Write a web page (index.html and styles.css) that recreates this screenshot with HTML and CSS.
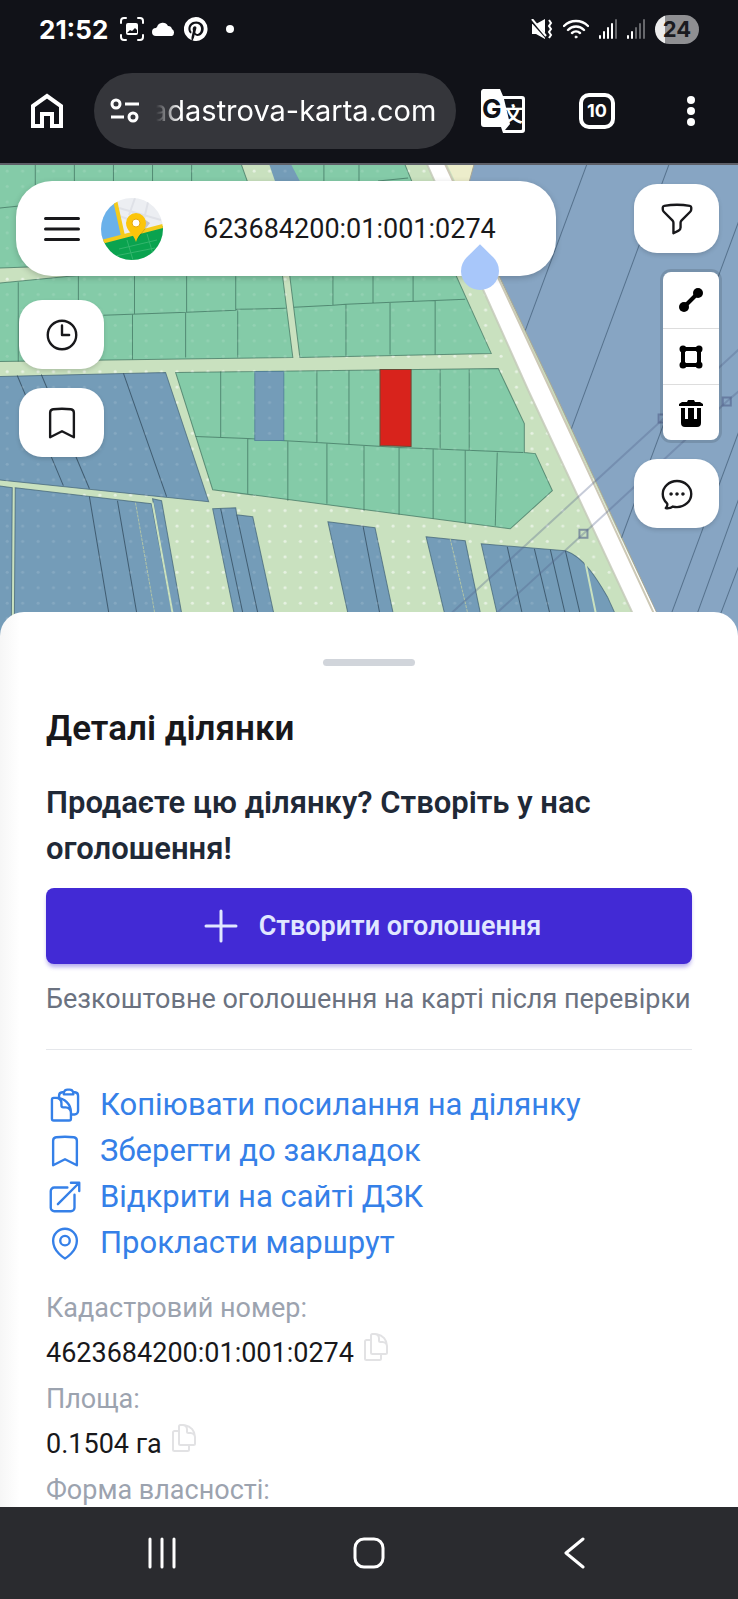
FILE: index.html
```html
<!DOCTYPE html>
<html lang="uk">
<head>
    <meta charset="UTF-8">
    <meta name="viewport" content="width=device-width, initial-scale=1.0">
    <title>Кадастрова карта</title>
    <link rel="stylesheet" href="styles.css">
</head>
<body>
    <header class="phone-top">
        <div class="status">
            <span class="time">21:52</span>
            <svg width="24" height="24" viewBox="0 0 24 24" fill="none" stroke="#fff" stroke-width="2" stroke-linecap="round">
                <path d="M1 6V4a3 3 0 0 1 3-3h2M18 1h2a3 3 0 0 1 3 3v2M23 18v2a3 3 0 0 1-3 3h-2M6 23H4a3 3 0 0 1-3-3v-2"/>
                <rect x="6" y="6" width="12" height="12" rx="2" fill="#fff" stroke="none"/>
                <path d="M7 16l3-3 2 1 3-3 2 2v3z" fill="#111218" stroke="none"/>
            </svg>
            <svg width="24" height="14" viewBox="0 0 24 14" fill="#fff">
                <path d="M4 14a4 4 0 0 1 0-8 2 2 0 0 1 1-1 6 6 0 0 1 11-1 4 4 0 0 1 4 3 4 4 0 0 1 0 7z"/>
            </svg>
            <svg width="24" height="24" viewBox="0 0 24 24" fill="#fff">
                <path d="M12 0a12 12 0 0 0-4.4 23.2c-.1-1-.2-2.400 0-3.400l1.400-6s-.3-.7-.3-1.700c0-1.700 1-2.900 2.200-2.900 1 0 1.500.8 1.500 1.700 0 1-.7 2.600-1 4-.3 1.200.6 2.200 1.800 2.200 2.100 0 3.800-2.300 3.800-5.500 0-2.900-2.100-4.900-5-4.900-3.400 0-5.500 2.600-5.500 5.200 0 1 .4 2.100.9 2.700.1.100.1.200.1.300l-.3 1.400c-.1.200-.2.300-.4.200-1.500-.7-2.400-2.900-2.400-4.600 0-3.800 2.800-7.300 7.900-7.300 4.200 0 7.400 3 7.400 6.900 0 4.100-2.600 7.500-6.200 7.500-1.200 0-2.400-.6-2.800-1.400l-.7 2.900c-.3 1-1 2.300-1.500 3.100A12 12 0 1 0 12 0z"/>
            </svg>
            <span class="dot"></span>
            <div class="status-right">
                <svg width="22" height="20" viewBox="0 0 22 20" fill="#fff">
                    <path d="M1 5h4l9-5v20l-9-5H1z"/>
                    <path d="M0 1l17 19" stroke="#111218" stroke-width="3"/>
                    <path d="M1 0l14 17" stroke="#fff" stroke-width="2"/>
                    <path d="M18 1l2 3-2 3 2 3-2 3 2 3-2 3" fill="none" stroke="#fff" stroke-width="2"/>
                </svg>
                <svg width="26" height="20" viewBox="0 0 26 20" fill="none" stroke="#fff" stroke-width="2.400" stroke-linecap="round">
                    <path d="M1 7a17 17 0 0 1 24 0M5 11a11 11 0 0 1 16 0M9 14a6 6 0 0 1 8 0"/>
                    <circle cx="13" cy="18" r="1" fill="#fff" stroke-width="1"/>
                </svg>
                <svg width="18" height="20" viewBox="0 0 18 20" stroke="#fff" stroke-width="2" stroke-linecap="round">
                    <path d="M1 17v2M5 13v6M9 9v10M13 5v14"/>
                    <path d="M17 1v18" stroke="#66676b"/>
                </svg>
                <svg width="18" height="20" viewBox="0 0 18 20" stroke="#fff" stroke-width="2" stroke-linecap="round">
                    <path d="M1 17v2M5 13v6"/>
                    <path d="M9 9v10M13 5v14M17 1v18" stroke="#66676b"/>
                </svg>
                <span class="battery">24</span>
            </div>
        </div>
        <div class="toolbar">
            <button class="tool" aria-label="Home">
                <svg width="32" height="36" viewBox="0 0 32 36" fill="none" stroke="#fff" stroke-width="4">
                    <path d="M2 13L16 3l14 10v20h-9V21H11v12H2z"/>
                </svg>
            </button>
            <div class="address">
                <svg width="30" height="26" viewBox="0 0 30 26" fill="none" stroke="#fff" stroke-width="3">
                    <circle cx="6" cy="6" r="4"/>
                    <path d="M15 6h14M1 19h13"/>
                    <circle cx="23" cy="19" r="4"/>
                </svg>
                <input type="text" value="adastrova-karta.com" aria-label="Address">
            </div>
            <button class="tool" aria-label="Translate">
                <svg width="44" height="44" viewBox="0 0 44 44">
                    <path d="M2 0h17l3 7h19a3 3 0 0 1 3 3v31a3 3 0 0 1-3 3H22l-2-6H3a3 3 0 0 1-3-3V3a3 3 0 0 1 2-3z" fill="#fff"/>
                    <path d="M23 10h17a1 1 0 0 1 1 1v29a1 1 0 0 1-1 1H24l5-6z" fill="#111218"/>
                    <text class="g-letter" x="1" y="29">G</text>
                    <text class="han-letter" x="22" y="33">文</text>
                </svg>
            </button>
            <button class="tool" aria-label="Tabs"><span class="tabs">10</span></button>
            <button class="tool" aria-label="Menu">
                <svg width="10" height="32" viewBox="0 0 10 32" fill="#fff">
                    <circle cx="5" cy="5" r="4"/><circle cx="5" cy="16" r="4"/><circle cx="5" cy="27" r="4"/>
                </svg>
            </button>
        </div>
    </header>

    <main class="page">
        <section class="map">
            <svg class="map-canvas" viewBox="0 165 738 470" preserveAspectRatio="xMidYMin slice">
                <defs>
                    <pattern id="dots" x="2" y="11" width="15.400" height="15.400" patternUnits="userSpaceOnUse">
                        <circle cx="6" cy="6" r="1.500" fill="#fff" fill-opacity=".5"/>
                    </pattern>
                    <pattern id="dots-soft" x="2" y="11" width="15.400" height="15.400" patternUnits="userSpaceOnUse">
                        <circle cx="6" cy="6" r="1.500" fill="#fff" fill-opacity=".12"/>
                    </pattern>
                </defs>
                <rect y="165" width="738" height="470" fill="#c9e1bf"/>
                <rect y="165" width="738" height="470" fill="url(#dots)"/>

                <!-- green plots -->
                <g fill="#84cba8" stroke="#3d6f5d" stroke-opacity=".7">
                    <path d="M-2 160H240L275 258L-2 268z"/>
                    <path d="M288 160H403L440 250H320z"/>
                    <path d="M-2 283L70 276L281 262L293 357L-2 361z"/>
                    <path d="M288 260H449L491 353L300 357z"/>
                    <path d="M176 372L498 368L524 423V452L535 453L552 490L510 528L213 489z"/>
                    <path fill="none" d="M36 165v20M75 165v20M114 165v20M153 165v20M192 165v20M324 165v20M359 165v20M0 208l20-2M378 181l30-3
                        M19 282v79M79 276v40M135 276v38M187 276v36M236 276v34M104 315l83-3 49-2 1-1 49-1M133 314v45M186 312v45M238 310v47
                        M294 307l39-2 13-1 46-2 73-3M333 276v29M373 276v27M413 276v25M346 304v52M390 302v52M435 300v54
                        M196 436l52 2 69 4 82 5 124 5
                        M221 371v66M317 370v72M349 370v74M440 369v79M469 369v81
                        M248 438v55M288 440v60M327 443v60M364 445v65M399 447v67M433 448v70M465 450v73M497 452l-2 73"/>
                </g>
                <path d="M268 160h21l26 50h-30z" fill="#749cb8"/>
                <path d="M255 371h29v69h-29z" fill="#749cb8" stroke="#4a7896" stroke-opacity=".7"/>

                <!-- blue plots -->
                <g fill="#749cb8" stroke="#3f5f73" stroke-opacity=".7">
                    <path d="M-2 376L166 372L209 501L-2 479z"/>
                    <path d="M-2 485L13 487L12 640H-2zM16 487L152 503L178 640H15z"/>
                    <path d="M153 498l9 2 25 140h-9z"/>
                    <path d="M213 508l23-1 1 7 16 2 27 124h-40z"/>
                    <path d="M328 521l47 6 24 113h-45z"/>
                    <path d="M426 536l39 4 21 100h-35z"/>
                    <path d="M481 543l84 7c18 6 31 27 42 46l20 44H503z"/>
                    <path fill="none" stroke="#2b4252" d="M18 375l46 110M42 374l48 114M124 373l43 123M90 496l24 144M118 500l24 140
                        M221 508l28 132M237 514l27 126M363 525l22 115M507 546l21 94M534 548l22 92M550 549l21 91M565 550l21 90"/>
                    <path fill="none" stroke="#c9d4a0" stroke-dasharray="3 1" d="M136 502l24 138M450 538l24 102"/>
                    <path fill="none" stroke="#c9e1bf" stroke-opacity="1" stroke-width="2" d="M153 502l25 138M585 562l16 78"/>
                </g>
                <rect y="165" width="560" height="470" fill="url(#dots-soft)"/>

                <!-- selected plot -->
                <path d="M380 369h31v77l-31-1z" fill="#d8231c" stroke="#6b4a35"/>

                <!-- field on the far side of the road -->
                <path d="M445 160h30l-6 22 30 94z" fill="#ecedcb"/>
                <path d="M475 160l-6 22 30 94 52 109 118 255h80V160z" fill="#87a5c3" stroke="#a9a697"/>
                <path fill="none" stroke="#4a6580" stroke-opacity=".8" d="M588 160l-63 170M670 160l-99 268M738 221L621 537M738 431l-77 208M738 498l-51 141M738 565l-28 74"/>
                <path d="M425 160l59 132 44 98 117 250h24L548 385 443 160z" fill="#fff"/>
                <path d="M425 160l59 132 44 98 117 250" fill="none" stroke="#c3c8b8" stroke-width="2" stroke-opacity=".8"/>
                <path d="M443 160l105 225 118 255" fill="none" stroke="#cdc9b6" stroke-width="2"/>

                <!-- power lines -->
                <g fill="none" stroke="#52608a" stroke-opacity=".32" stroke-width="2">
                    <path d="M422 639L662 419l76-70M467 639l116-106 143-132 14-12"/>
                    <path stroke-opacity=".6" d="M579 529h8v8h-8zM722 397h8v8h-8zM658 414h8v8h-8z"/>
                </g>
            </svg>

            <div class="map-col left">
                <div class="search">
                    <button class="burger" aria-label="Меню">
                        <svg class="ico ico-lg" viewBox="0 0 24 24"><path d="M3.750 6.750h16.500M3.750 12h16.500m-16.500 5.250h16.500"/></svg>
                    </button>
                    <a href="#" class="logo" aria-label="Кадастрова карта">
                        <svg width="62" height="62" viewBox="0 0 62 62">
                            <clipPath id="logo-clip"><circle cx="31" cy="31" r="31"/></clipPath>
                            <g clip-path="url(#logo-clip)">
                                <rect width="62" height="62" fill="#eceef2"/>
                                <path d="M18 10l42 12M34 0l-6 17M48 0l-8 34M18 18l24 8" stroke="#dfe1e7" stroke-width="2"/>
                                <path d="M0 0h13l9 38L0 44z" fill="#6ab1ea"/>
                                <path d="M0 44l62-16v34H0z" fill="#0aa34f"/>
                                <path d="M18 51l38-9M26 42l6 20M46 36l6 20M14 58l40-8" stroke="#34b56d" fill="none"/>
                                <path d="M0 44l62-16M14 2l8 36" stroke="#f5cb1b" stroke-width="4" fill="none"/>
                                <path d="M35 43l14-18-6-4z" fill="#000" fill-opacity=".18"/>
                                <path d="M35 44c-2-8-10-11-10-19a10 10 0 0 1 20 0c0 8-8 11-10 19z" fill="#fcc50a"/>
                                <circle cx="35" cy="25" r="4" fill="#fff" stroke="#e8a90c" stroke-width="1"/>
                            </g>
                        </svg>
                    </a>
                    <input type="text" value="623684200:01:001:0274" aria-label="Пошук ділянки">
                    <span class="caret"></span>
                </div>
                <button class="map-btn" aria-label="Історія">
                    <svg class="ico" viewBox="0 0 24 24"><path d="M12 6v6h4.500m4.500 0a9 9 0 1 1-18 0 9 9 0 0 1 18 0Z"/></svg>
                </button>
                <button class="map-btn" aria-label="Закладки">
                    <svg class="ico" viewBox="0 0 24 24"><path d="M17.593 3.322c1.100.128 1.907 1.077 1.907 2.185V21L12 17.250 4.500 21V5.507c0-1.108.806-2.057 1.907-2.185a48.507 48.507 0 0 1 11.186 0Z"/></svg>
                </button>
            </div>

            <div class="map-col right">
                <button class="map-btn" aria-label="Фільтр">
                    <svg class="ico" viewBox="0 0 24 24"><path d="M12 3c2.755 0 5.455.232 8.083.678.533.09.917.556.917 1.096v1.044a2.250 2.250 0 0 1-.659 1.591l-5.432 5.432a2.250 2.250 0 0 0-.659 1.591v2.927a2.250 2.250 0 0 1-1.244 2.013L9.750 21v-6.568a2.250 2.250 0 0 0-.659-1.591L3.659 7.409A2.250 2.250 0 0 1 3 5.818V4.774c0-.54.384-1.006.917-1.096A48.320 48.320 0 0 1 12 3Z"/></svg>
                </button>
                <div class="draw">
                    <button aria-label="Лінія">
                        <svg width="24" height="24" viewBox="0 0 24 24">
                            <path d="M5 19L19 5" stroke="#000" stroke-width="4"/>
                            <circle cx="5" cy="19" r="5"/><circle cx="19" cy="5" r="5"/>
                        </svg>
                    </button>
                    <button aria-label="Полігон">
                        <svg width="24" height="24" viewBox="0 0 24 24">
                            <path d="M4 4h16v16H4z" fill="none" stroke="#000" stroke-width="4"/>
                            <circle cx="4" cy="4" r="3.500"/><circle cx="20" cy="4" r="3.500"/><circle cx="4" cy="20" r="3.500"/><circle cx="20" cy="20" r="3.500"/>
                        </svg>
                    </button>
                    <button aria-label="Видалити">
                        <svg width="24" height="28" viewBox="0 0 24 28">
                            <path d="M0 7V5l3-2h5l1-2h6l1 2h5l3 2v2zM2 9h20v15a4 4 0 0 1-4 4H6a4 4 0 0 1-4-4z"/>
                            <path d="M6 9h3v11H6zM15 9h3v11h-3z" fill="#fff"/>
                        </svg>
                    </button>
                </div>
                <button class="map-btn" aria-label="Чат">
                    <svg class="ico" viewBox="0 0 24 24"><path d="M8.625 12a.375.375 0 1 1-.75 0 .375.375 0 0 1 .75 0Zm0 0H8.250m4.125 0a.375.375 0 1 1-.75 0 .375.375 0 0 1 .75 0Zm0 0H12m4.125 0a.375.375 0 1 1-.75 0 .375.375 0 0 1 .75 0Zm0 0h-.375M21 12c0 4.556-4.030 8.250-9 8.250a9.764 9.764 0 0 1-2.555-.337A5.972 5.972 0 0 1 5.410 20.970a5.969 5.969 0 0 1-.474-.065 4.480 4.480 0 0 0 .978-2.025c.09-.457-.133-.901-.467-1.226C3.930 16.178 3 14.189 3 12c0-4.556 4.030-8.250 9-8.250s9 3.694 9 8.250Z"/></svg>
                </button>
            </div>
        </section>

        <section class="sheet">
            <div class="handle"></div>
            <h1>Деталі ділянки</h1>
            <h2>Продаєте цю ділянку? Створіть у нас оголошення!</h2>
            <button class="create">
                <svg class="ico ico-lg" viewBox="0 0 24 24"><path d="M12 4.500v15m7.500-7.500h-15"/></svg>
                Створити оголошення
            </button>
            <p class="note">Безкоштовне оголошення на карті після перевірки</p>
            <hr>
            <nav class="links">
                <a href="#">
                    <svg class="ico" viewBox="0 0 24 24"><path d="M8.250 7.500V6.108c0-1.135.845-2.098 1.976-2.192.373-.03.748-.057 1.123-.08M15.750 18H18a2.250 2.250 0 0 0 2.250-2.250V6.108c0-1.135-.845-2.098-1.976-2.192a48.424 48.424 0 0 0-1.123-.08M15.750 18.750v-1.875a3.375 3.375 0 0 0-3.375-3.375h-1.500a1.125 1.125 0 0 1-1.125-1.125v-1.500A3.375 3.375 0 0 0 6.375 7.500H5.250m11.900-3.664A2.251 2.251 0 0 0 15 2.250h-1.500a2.251 2.251 0 0 0-2.150 1.586m5.800 0c.065.21.1.433.1.664v.75h-6V4.500c0-.231.035-.454.1-.664M6.750 7.500H4.875c-.621 0-1.125.504-1.125 1.125v12c0 .621.504 1.125 1.125 1.125h9.750c.621 0 1.125-.504 1.125-1.125V16.500a9 9 0 0 0-9-9Z"/></svg>
                    Копіювати посилання на ділянку
                </a>
                <a href="#">
                    <svg class="ico" viewBox="0 0 24 24"><path d="M17.593 3.322c1.100.128 1.907 1.077 1.907 2.185V21L12 17.250 4.500 21V5.507c0-1.108.806-2.057 1.907-2.185a48.507 48.507 0 0 1 11.186 0Z"/></svg>
                    Зберегти до закладок
                </a>
                <a href="#">
                    <svg class="ico" viewBox="0 0 24 24"><path d="M13.500 6H5.250A2.250 2.250 0 0 0 3 8.250v10.500A2.250 2.250 0 0 0 5.250 21h10.500A2.250 2.250 0 0 0 18 18.750V10.500m-10.500 6L21 3m0 0h-5.250M21 3v5.250"/></svg>
                    Відкрити на сайті ДЗК
                </a>
                <a href="#">
                    <svg class="ico" viewBox="0 0 24 24"><path d="M15 10.500a3 3 0 1 1-6 0 3 3 0 0 1 6 0Z"/><path d="M19.500 10.500c0 7.142-7.500 11.250-7.500 11.250S4.500 17.642 4.500 10.500a7.500 7.500 0 1 1 15 0Z"/></svg>
                    Прокласти маршрут
                </a>
            </nav>
            <dl class="details">
                <dt>Кадастровий номер:</dt>
                <dd>4623684200:01:001:0274
                    <button class="copy" aria-label="Копіювати номер">
                        <svg class="ico ico-sm" viewBox="0 0 24 24"><path d="M15.750 17.250v3.375c0 .621-.504 1.125-1.125 1.125h-9.750a1.125 1.125 0 0 1-1.125-1.125V7.875c0-.621.504-1.125 1.125-1.125H6.750a9.060 9.060 0 0 1 1.500.124m7.500 10.376h3.375c.621 0 1.125-.504 1.125-1.125V11.250c0-4.460-3.243-8.161-7.500-8.876a9.060 9.060 0 0 0-1.500-.124H9.375c-.621 0-1.125.504-1.125 1.125v3.500m7.500 10.375H9.375a1.125 1.125 0 0 1-1.125-1.125v-9.250m12 6.625v-1.875a3.375 3.375 0 0 0-3.375-3.375h-1.500a1.125 1.125 0 0 1-1.125-1.125v-1.500a3.375 3.375 0 0 0-3.375-3.375H9.750"/></svg>
                    </button>
                </dd>
                <dt>Площа:</dt>
                <dd>0.1504 га
                    <button class="copy" aria-label="Копіювати площу">
                        <svg class="ico ico-sm" viewBox="0 0 24 24"><path d="M15.750 17.250v3.375c0 .621-.504 1.125-1.125 1.125h-9.750a1.125 1.125 0 0 1-1.125-1.125V7.875c0-.621.504-1.125 1.125-1.125H6.750a9.060 9.060 0 0 1 1.500.124m7.500 10.376h3.375c.621 0 1.125-.504 1.125-1.125V11.250c0-4.460-3.243-8.161-7.500-8.876a9.060 9.060 0 0 0-1.500-.124H9.375c-.621 0-1.125.504-1.125 1.125v3.500m7.500 10.375H9.375a1.125 1.125 0 0 1-1.125-1.125v-9.250m12 6.625v-1.875a3.375 3.375 0 0 0-3.375-3.375h-1.500a1.125 1.125 0 0 1-1.125-1.125v-1.500a3.375 3.375 0 0 0-3.375-3.375H9.750"/></svg>
                    </button>
                </dd>
                <dt>Форма власності:</dt>
            </dl>
        </section>
    </main>

    <footer class="phone-nav">
        <button aria-label="Recents">
            <svg width="32" height="32" viewBox="0 0 32 32"><path d="M3 2v28M15 2v28M27 2v28"/></svg>
        </button>
        <button aria-label="Home">
            <svg width="32" height="32" viewBox="0 0 32 32"><rect x="2" y="2" width="28" height="28" rx="9"/></svg>
        </button>
        <button aria-label="Back">
            <svg width="32" height="32" viewBox="0 0 32 32"><path d="M24 2L7 16l17 14"/></svg>
        </button>
    </footer>
</body>
</html>
```
FILE: styles.css
```css
*{
    margin: 0;
    padding: 0;
    box-sizing: border-box;
}
body{
    display: flex;
    flex-direction: column;
    height: 100vh;
    overflow: hidden;
    font-family: Roboto, "Liberation Sans", sans-serif;
    font-size: 27px;
    color: #18181b;
    background-color: white;
}
button{
    border: none;
    background: none;
    font: inherit;
    color: inherit;
    cursor: pointer;
}
input{
    border: none;
    outline: none;
    background: none;
    min-width: 0;
    font: inherit;
    color: inherit;
}
a{
    color: inherit;
    text-decoration: none;
}
svg{
    display: block;
    flex-shrink: 0;
}
.ico{
    width: 38px;
    height: 38px;
    fill: none;
    stroke: currentColor;
    stroke-width: 1.5;
    stroke-linecap: round;
    stroke-linejoin: round;
}
.ico-lg{
    width: 48px;
    height: 48px;
}
.ico-sm{
    width: 32px;
    height: 32px;
}

/* phone bars */
.phone-top{
    background-color: #111218;
    color: white;
    font-family: Inter, Roboto, sans-serif;
    border-bottom: 2px solid #5e6068;
}
.status{
    display: flex;
    align-items: center;
    gap: 8px;
    height: 58px;
    padding: 0 39px;
}
.time{
    font-size: 26px;
    font-weight: 700;
    margin-right: 4px;
}
.dot{
    width: 8px;
    height: 8px;
    margin-left: 10px;
    border-radius: 50%;
    background-color: white;
}
.status-right{
    display: flex;
    align-items: center;
    gap: 10px;
    margin-left: auto;
}
.battery{
    width: 44px;
    line-height: 29px;
    border-radius: 15px;
    background: linear-gradient(to right, #ececec 10px, #8f8f92 10px);
    color: #1b1b20;
    font-size: 22px;
    font-weight: 700;
    text-align: center;
}
.toolbar{
    display: flex;
    align-items: center;
    height: 105px;
}
.tool{
    display: flex;
    align-items: center;
    justify-content: center;
    flex-shrink: 0;
    width: 94px;
    height: 76px;
}
.address{
    display: flex;
    align-items: center;
    flex: 1;
    gap: 16px;
    min-width: 0;
    height: 76px;
    padding: 0 16px;
    border-radius: 38px;
    background-color: #35363b;
    font-size: 29px;
}
.address input{
    flex: 1;
    text-indent: -5px;
    mask-image: linear-gradient(to right, transparent, black 24px);
}
.tabs{
    width: 36px;
    line-height: 28px;
    border: 4px solid white;
    border-radius: 10px;
    font-size: 18px;
    font-weight: 700;
}
.g-letter{
    font: 700 26px Inter, sans-serif;
    fill: #111218;
}
.han-letter{
    font: 700 20px "Noto Sans CJK SC", sans-serif;
    fill: white;
}
.phone-nav{
    display: flex;
    align-items: center;
    justify-content: center;
    gap: 174px;
    height: 92px;
    background-color: #2a2b2f;
}
.phone-nav svg{
    fill: none;
    stroke: white;
    stroke-width: 3;
    stroke-linecap: round;
    stroke-linejoin: round;
}

/* map */
.page{
    display: flex;
    flex-direction: column;
    flex: 1;
    min-height: 0;
    overflow: hidden;
}
.map{
    position: relative;
    display: flex;
    justify-content: space-between;
    flex-shrink: 0;
    height: 471px;
    padding: 16px 19px 0 16px;
}
.map-canvas{
    position: absolute;
    inset: 0;
    width: 100%;
    height: 100%;
}
.map-col{
    position: relative;
    display: flex;
    flex-direction: column;
    gap: 19px;
}
.left{
    flex: 1;
    max-width: 540px;
}
.left .map-btn{
    margin-left: 3px;
}
.right{
    align-items: flex-end;
    padding-top: 3px;
}
.search{
    position: relative;
    display: flex;
    align-items: center;
    height: 95px;
    margin-bottom: 5px;
    padding: 0 40px 0 22px;
    border-radius: 36px;
    background-color: white;
    box-shadow: 0 2px 6px rgba(0, 0, 0, .2);
}
.logo{
    margin: 0 40px 0 15px;
}
.search input{
    flex: 1;
}
/* text selection handle hanging from the field */
.caret{
    position: absolute;
    left: 445px;
    top: 71px;
    width: 38px;
    height: 38px;
    border-radius: 0 50% 50% 50%;
    background-color: #a8c7fa;
    transform: rotate(45deg);
}
.map-btn{
    display: flex;
    align-items: center;
    justify-content: center;
    width: 85px;
    height: 69px;
    border-radius: 23px;
    background-color: white;
    box-shadow: 0 2px 4px rgba(0, 0, 0, .15);
}
.draw{
    width: 56px;
    border-radius: 8px;
    background-color: white;
    box-shadow: 0 0 0 3px rgba(0, 0, 0, .12);
}
.draw button{
    display: flex;
    align-items: center;
    justify-content: center;
    width: 100%;
    height: 56px;
}
.draw button + button{
    border-top: 1px solid #ddd;
}

/* bottom sheet */
.sheet{
    position: relative;
    flex: 1;
    margin-top: -24px;
    padding: 47px 46px 0;
    border-radius: 24px 24px 0 0;
    background: linear-gradient(to right, #f6f6f6, white 20px);
}
.handle{
    width: 92px;
    height: 7px;
    margin: 0 auto 39px;
    border-radius: 4px;
    background-color: #d1d5db;
}
h1{
    margin-bottom: 27px;
    font-size: 35px;
    font-weight: 600;
    line-height: 48px;
}
h2{
    margin-bottom: 16px;
    color: #1f2937;
    font-size: 31px;
    font-weight: 600;
    line-height: 46px;
}
.create{
    display: flex;
    align-items: center;
    justify-content: center;
    gap: 14px;
    width: 100%;
    height: 76px;
    margin-bottom: 16px;
    border-radius: 8px;
    background-color: #422ad5;
    box-shadow: 0 4px 4px -1px rgba(66, 42, 213, .4);
    color: #e0e7ff;
    font-weight: 600;
}
.note{
    color: #6b7280;
    line-height: 38px;
}
hr{
    margin: 31px 0 32px;
    border: none;
    border-top: 1px solid #e5e7eb;
}
.links{
    margin-bottom: 19px;
    color: #3580e8;
    font-size: 31px;
    line-height: 46px;
}
.links a{
    display: flex;
    align-items: center;
    gap: 16px;
}
.details dt{
    color: #9ca3af;
    line-height: 46px;
}
.details dd{
    display: flex;
    gap: 6px;
    line-height: 45px;
}
.copy{
    height: 32px;
    color: #e2e2e4;
}
```
